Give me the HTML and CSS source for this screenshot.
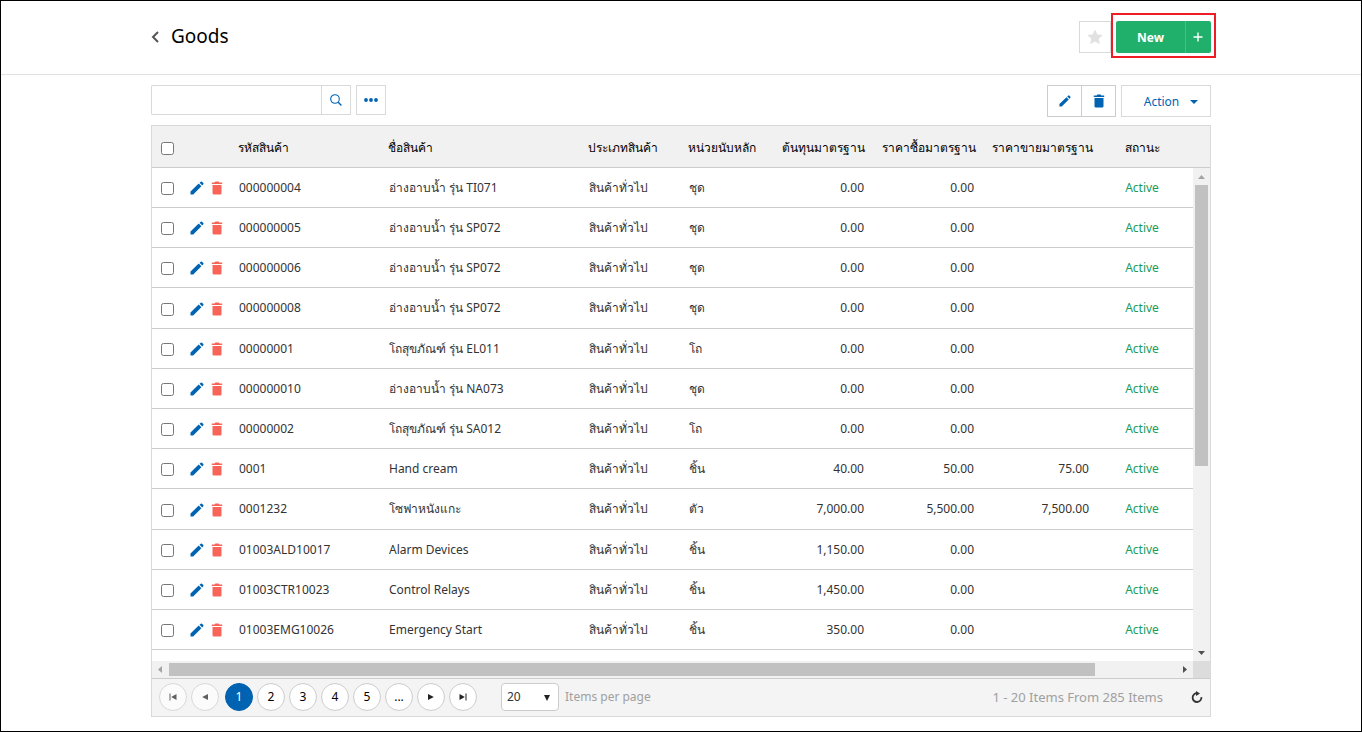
FILE: index.html
```
<!DOCTYPE html>
<html lang="th">
<head>
    <meta charset="UTF-8">
    <meta name="viewport" content="width=device-width, initial-scale=1">
    <title>Goods</title>
    <link rel="stylesheet" href="styles.css">
</head>
<body>
    <svg class="sprite" aria-hidden="true">
        <symbol id="icon-pencil" viewBox="0 0 14 14">
            <path d="M0.5 10.6 8.7 2.6 11.4 5.3 3.2 13.5H0.5zM9.6 1.8 10.8 0.7Q11.4 0.2 12 0.7L13.3 2Q13.8 2.6 13.3 3.2L12.2 4.4z"/>
        </symbol>
        <symbol id="icon-trash" viewBox="0 0 12 14">
            <path d="M1.5 4H10.5V12.2Q10.5 13.6 9.1 13.6H2.9Q1.5 13.6 1.5 12.2zM0.8 1.4H3.6L4.4 0.6H7.6L8.4 1.4H11.2V2.9H0.8z"/>
        </symbol>
    </svg>

    <header class="page-header">
        <div class="container header-row">
            <a href="#" class="back" aria-label="Back">
                <svg viewBox="0 0 8 12"><path d="M7 1 2 6 7 11" fill="none" stroke="#555" stroke-width="2"/></svg>
            </a>
            <h1>Goods</h1>
            <button class="star-button" aria-label="Favorite">
                <svg viewBox="0 0 16 16"><path d="M8 0.4 10.3 5.4 15.8 6 11.7 9.7 12.9 15.2 8 12.4 3.1 15.2 4.3 9.7 0.2 6 5.7 5.4z"/></svg>
            </button>
            <div class="new-group">
                <button class="new-button">New</button>
                <button class="plus-button" aria-label="New item">
                    <svg viewBox="0 0 10 10"><path d="M5 0.5V9.5M0.5 5H9.5" stroke="#fff" stroke-width="1.4"/></svg>
                </button>
            </div>
        </div>
    </header>

    <main class="container content">
        <div class="toolbar">
            <div class="search">
                <input type="text" aria-label="Search">
                <button aria-label="Search">
                    <svg viewBox="0 0 12 12"><g fill="none" stroke="#0063b2"><circle cx="5" cy="5" r="4.3" stroke-width="1.1"/><path d="M8.2 8.2 11.4 11.4" stroke-width="1.4"/></g></svg>
                </button>
            </div>
            <button class="more-button" aria-label="More">
                <svg viewBox="0 0 14 4"><circle cx="2" cy="2" r="1.9"/><circle cx="7" cy="2" r="1.9"/><circle cx="12" cy="2" r="1.9"/></svg>
            </button>
            <div class="edit-group">
                <button aria-label="Edit"><svg class="pencil"><use href="#icon-pencil"/></svg></button>
                <button aria-label="Delete"><svg class="trash"><use href="#icon-trash"/></svg></button>
            </div>
            <button class="action-button">Action
                <svg viewBox="0 0 8 4"><path d="M0 0H8L4 4z"/></svg>
            </button>
        </div>

        <div class="grid">
            <div class="grid-view">
                <div class="grid-table">
                    <table>
                        <colgroup>
                            <col class="col-check"><col class="col-tools"><col class="col-code"><col class="col-name">
                            <col class="col-type"><col class="col-unit"><col class="col-cost"><col class="col-buy">
                            <col class="col-sale"><col class="col-status"><col>
                        </colgroup>
                        <thead>
                            <tr>
                                <th><input type="checkbox" aria-label="Select all"></th>
                                <th></th>
                                <th>รหัสสินค้า</th>
                                <th>ชื่อสินค้า</th>
                                <th>ประเภทสินค้า</th>
                                <th>หน่วยนับหลัก</th>
                                <th>ต้นทุนมาตรฐาน</th>
                                <th>ราคาซื้อมาตรฐาน</th>
                                <th>ราคาขายมาตรฐาน</th>
                                <th class="status">สถานะ</th>
                                <th></th>
                            </tr>
                        </thead>
                        <tbody id="rows"></tbody>
                    </table>
                </div>
                <div class="scroll-y">
                    <svg viewBox="0 0 7 4"><path d="M0 4H7L3.5 0z" fill="#a3a3a3"/></svg>
                    <div class="track"><div class="thumb"></div></div>
                    <svg viewBox="0 0 7 4"><path d="M0 0H7L3.5 4z" fill="#505050"/></svg>
                </div>
                <div class="scroll-x">
                    <svg viewBox="0 0 4 7"><path d="M4 0V7L0 3.5z" fill="#a3a3a3"/></svg>
                    <div class="track"><div class="thumb"></div></div>
                    <svg viewBox="0 0 4 7"><path d="M0 0V7L4 3.5z" fill="#505050"/></svg>
                </div>
                <div class="scroll-corner"></div>
            </div>

            <div class="pager">
                <div class="pages">
                    <button disabled aria-label="First page"><svg viewBox="0 0 8 8"><path d="M0.5 0.5H1.5V7.5H0.5zM7.5 1V7L2.2 4z"/></svg></button>
                    <button disabled aria-label="Previous page"><svg viewBox="0 0 8 8"><path d="M7 1V7L1.2 4z"/></svg></button>
                </div>
                <div class="pages">
                    <button class="current">1</button>
                    <button>2</button>
                    <button>3</button>
                    <button>4</button>
                    <button>5</button>
                    <button>...</button>
                    <button aria-label="Next page"><svg viewBox="0 0 8 8"><path d="M1 1V7L6.8 4z"/></svg></button>
                    <button aria-label="Last page"><svg viewBox="0 0 8 8"><path d="M6.5 0.5H7.5V7.5H6.5zM0.5 1V7L5.8 4z"/></svg></button>
                </div>
                <div class="page-size">
                    <select id="pageSize"><option>20</option><option>50</option><option>100</option></select>
                    <svg viewBox="0 0 8 8"><path d="M1 2H7L4 8z"/></svg>
                </div>
                <label for="pageSize">Items per page</label>
                <span class="info">1 - 20 Items From 285 Items</span>
                <button class="refresh" aria-label="Refresh">
                    <svg viewBox="0 0 12 12"><path d="M6.3 2.2A4.4 4.4 0 1 0 10.4 6.2" fill="none" stroke="#333" stroke-width="1.8"/><path d="M5 0 9 2.4 5 5z" fill="#333"/></svg>
                </button>
            </div>
        </div>
    </main>

    <script src="script.js"></script>
</body>
</html>
```
FILE: styles.css
```
:root {
    --blue: #0063b2;
    --green: #20b06b;
    --line: #ccc;
    --light-line: #d9d9d9;
}

* {
    box-sizing: border-box;
}

body {
    margin: 0;
    height: 100vh;
    display: flex;
    flex-direction: column;
    border: 1px solid #000;
    background: #fff;
    color: #333;
    font: 12px/18px Tahoma, "Noto Sans", "DejaVu Sans", sans-serif;
}

button, input, select {
    font: inherit;
    color: inherit;
    margin: 0;
}

button {
    display: flex;
    align-items: center;
    justify-content: center;
    padding: 0;
    background: #fff;
    border: 1px solid var(--light-line);
    cursor: pointer;
}

.sprite {
    display: none;
}

.container {
    width: 100%;
    max-width: 1060px;
    margin: 0 auto;
}

/* header */
.page-header {
    border-bottom: 1px solid #e1e1e1;
    padding: 20px 0 21px;
}

.header-row {
    display: flex;
    align-items: center;
}

.back {
    display: flex;
    width: 20px;
}

.back svg {
    width: 8px;
    height: 12px;
}

h1 {
    margin: 0 auto 0 0;
    padding-bottom: 2px;
    color: #000;
    font-size: 19px;
    line-height: 24px;
    font-weight: 400;
}

.star-button {
    width: 32px;
    height: 32px;
    margin-right: 5px;
}

.star-button svg {
    width: 16px;
    height: 16px;
    fill: #e1e1e1;
}

.new-group {
    position: relative;
    display: flex;
}

.new-group::after {
    content: "";
    position: absolute;
    inset: -8px -5px -5px;
    border: 2px solid #ee1c25;
    pointer-events: none;
}

.new-button, .plus-button {
    height: 32px;
    background: var(--green);
    border: 0;
    color: #fff;
    font-weight: 700;
}

.new-button {
    width: 69px;
    padding-top: 1px;
    border-radius: 2px 0 0 2px;
}

.plus-button {
    width: 26px;
    padding-right: 2px;
    border-left: 1px solid #3cc584;
    border-radius: 0 2px 2px 0;
}

.plus-button svg {
    width: 10px;
    height: 10px;
}

/* toolbar */
.content {
    flex: 1;
    min-height: 0;
    display: flex;
    flex-direction: column;
    padding: 10px 0 14px;
}

.toolbar {
    display: flex;
    align-items: flex-start;
    gap: 5px;
    margin-bottom: 8px;
    color: var(--blue);
    fill: var(--blue);
}

.search {
    display: flex;
    width: 200px;
    height: 30px;
}

.search input {
    flex: 1;
    min-width: 0;
    border: 1px solid var(--light-line);
    border-right: 0;
    border-radius: 2px 0 0 2px;
}

.search button {
    width: 30px;
}

.search svg {
    width: 12px;
    height: 12px;
}

.more-button {
    width: 30px;
    height: 30px;
}

.more-button svg {
    width: 14px;
    height: 4px;
}

.edit-group {
    display: flex;
    margin-left: auto;
}

.edit-group button {
    width: 35px;
    height: 32px;
    border-color: var(--line);
}

.edit-group button + button {
    width: 34px;
    border-left: 0;
}

.edit-group svg {
    width: 12px;
    height: 14px;
}

.action-button {
    width: 90px;
    height: 32px;
    gap: 11px;
    padding: 1px 0 0 10px;
}

.action-button svg {
    width: 8px;
    height: 4px;
}

/* grid */
.grid {
    flex: 1;
    min-height: 0;
    display: flex;
    flex-direction: column;
    border: 1px solid var(--light-line);
}

.grid-view {
    flex: 1;
    min-height: 0;
    display: grid;
    grid-template-columns: minmax(0, 1fr) 17px;
    grid-template-rows: minmax(0, 1fr) 17px;
    background: #f1f1f1;
}

.grid-table {
    overflow: hidden;
    background: #fff;
}

table {
    width: 1134px;
    table-layout: fixed;
    border-collapse: separate;
    border-spacing: 0;
}

.col-check { width: 30px; }
.col-tools { width: 49px; }
.col-code { width: 150px; }
.col-name { width: 200px; }
.col-type { width: 100px; }
.col-unit { width: 94px; }
.col-cost { width: 100px; }
.col-buy { width: 110px; }
.col-sale { width: 115px; }
.col-status { width: 84px; }

th, td {
    height: 40px;
    padding: 0 0 0 8px;
    border-bottom: 1px solid var(--line);
    text-align: left;
    font-weight: 400;
    white-space: nowrap;
    vertical-align: middle;
}

tr:nth-child(5n + 4) td {
    height: 41px;
}

th {
    height: 42px;
    padding: 2px 0 0 7px;
    background: #f1f1f1;
    color: #000;
}

th:first-child, td:first-child {
    padding-left: 9px;
}

th input, td input {
    display: block;
    width: 13px;
    height: 13px;
    margin-top: 2px;
}

td.number {
    padding-right: 11px;
    text-align: right;
}

th.status, td.status {
    padding-left: 0;
    text-align: center;
}

td.status {
    color: #1a9c5b;
}

.tools {
    display: flex;
    gap: 7px;
    padding-top: 1px;
}

.tools a {
    display: flex;
}

.pencil {
    width: 14px;
    height: 14px;
    fill: var(--blue);
}

.trash {
    width: 12px;
    height: 14px;
}

.tools .trash {
    fill: #f96458;
}

/* scroll bars */
.scroll-y, .scroll-x {
    display: flex;
    align-items: center;
    justify-content: space-between;
    background: #f1f1f1;
}

.scroll-y {
    flex-direction: column;
    margin-top: 41px;
    padding: 7px 0 6px;
    border-top: 1px solid var(--line);
}

.scroll-x {
    padding: 0 6px;
}

.scroll-y svg {
    width: 7px;
    height: 4px;
}

.scroll-x svg {
    width: 4px;
    height: 7px;
}

.track {
    flex: 1;
    display: flex;
}

.scroll-y .track {
    margin: 6px 0;
}

.scroll-x .track {
    margin: 0 7px;
}

.thumb {
    background: #c1c1c1;
}

.scroll-y .thumb {
    width: 13px;
    height: 61%;
}

.scroll-x .thumb {
    width: 92%;
    height: 13px;
}

.scroll-corner {
    background: #dcdcdc;
}

/* pager */
.pager {
    display: flex;
    align-items: center;
    padding: 4px 7px 5px;
    background: #f4f4f4;
    border-top: 1px solid var(--line);
    color: #a0a0a0;
}

.pages {
    display: flex;
    gap: 4px;
    margin-right: 6px;
}

.pages button {
    width: 28px;
    height: 28px;
    border: 1px solid var(--line);
    border-radius: 50%;
    color: #000;
}

.pages button:disabled {
    opacity: 0.7;
}

.pages svg {
    width: 8px;
    height: 8px;
    fill: #222;
}

.pages .current {
    background: var(--blue);
    border-color: var(--blue);
    color: #fff;
}

.page-size {
    display: grid;
    align-items: center;
    margin: 0 6px 0 18px;
}

.page-size select, .page-size svg {
    grid-area: 1 / 1;
}

.page-size select {
    appearance: none;
    width: 58px;
    height: 28px;
    padding: 0 5px;
    background: #fff;
    border: 1px solid var(--line);
    border-radius: 4px;
    color: #333;
}

.page-size svg {
    justify-self: end;
    width: 8px;
    height: 8px;
    margin-right: 8px;
    fill: #222;
    pointer-events: none;
}

.info {
    margin-left: auto;
    font-size: 13px;
}

.refresh {
    width: 12px;
    height: 12px;
    margin: 0 0 0 28px;
    background: none;
    border: 0;
}

.refresh svg {
    width: 12px;
    height: 12px;
}
```
FILE: script.js
```
const goods = [
    ['000000004', 'อ่างอาบน้ำ รุ่น TI071', 'สินค้าทั่วไป', 'ชุด', '0.00', '0.00', '', 'Active'],
    ['000000005', 'อ่างอาบน้ำ รุ่น SP072', 'สินค้าทั่วไป', 'ชุด', '0.00', '0.00', '', 'Active'],
    ['000000006', 'อ่างอาบน้ำ รุ่น SP072', 'สินค้าทั่วไป', 'ชุด', '0.00', '0.00', '', 'Active'],
    ['000000008', 'อ่างอาบน้ำ รุ่น SP072', 'สินค้าทั่วไป', 'ชุด', '0.00', '0.00', '', 'Active'],
    ['00000001', 'โถสุขภัณฑ์ รุ่น EL011', 'สินค้าทั่วไป', 'โถ', '0.00', '0.00', '', 'Active'],
    ['000000010', 'อ่างอาบน้ำ รุ่น NA073', 'สินค้าทั่วไป', 'ชุด', '0.00', '0.00', '', 'Active'],
    ['00000002', 'โถสุขภัณฑ์ รุ่น SA012', 'สินค้าทั่วไป', 'โถ', '0.00', '0.00', '', 'Active'],
    ['0001', 'Hand cream', 'สินค้าทั่วไป', 'ชิ้น', '40.00', '50.00', '75.00', 'Active'],
    ['0001232', 'โซฟาหนังแกะ', 'สินค้าทั่วไป', 'ตัว', '7,000.00', '5,500.00', '7,500.00', 'Active'],
    ['01003ALD10017', 'Alarm Devices', 'สินค้าทั่วไป', 'ชิ้น', '1,150.00', '0.00', '', 'Active'],
    ['01003CTR10023', 'Control Relays', 'สินค้าทั่วไป', 'ชิ้น', '1,450.00', '0.00', '', 'Active'],
    ['01003EMG10026', 'Emergency Start', 'สินค้าทั่วไป', 'ชิ้น', '350.00', '0.00', '', 'Active'],
    ['', '', '', 'ชิ้น', '', '', '', '']
];

const classes = ['', '', '', '', 'number', 'number', 'number', 'status'];

document.getElementById('rows').innerHTML = goods.map(item => `
    <tr>
        <td><input type="checkbox" aria-label="Select ${item[0]}"></td>
        <td>
            <div class="tools">
                <a href="#" aria-label="Edit"><svg class="pencil"><use href="#icon-pencil"/></svg></a>
                <a href="#" aria-label="Delete"><svg class="trash"><use href="#icon-trash"/></svg></a>
            </div>
        </td>
        ${item.map((value, i) => `<td class="${classes[i]}">${value}</td>`).join('')}
        <td></td>
    </tr>`).join('');
```
